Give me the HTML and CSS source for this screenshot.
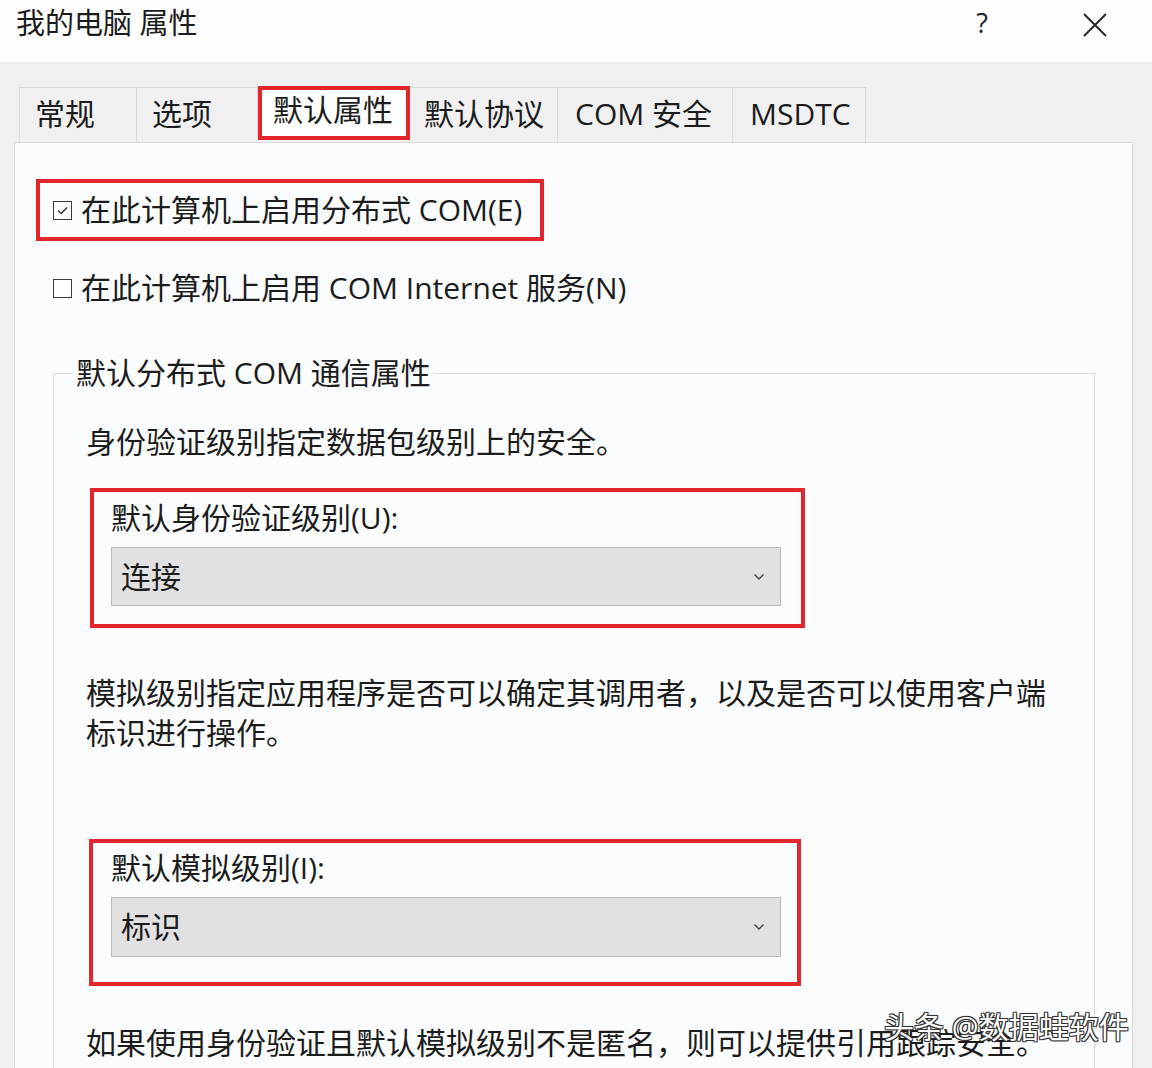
FILE: index.html
```html
<!DOCTYPE html>
<html lang="zh-CN">
<head>
  <meta charset="UTF-8" />
  <title>我的电脑 属性</title>
  <link rel="stylesheet" href="styles.css">
</head>
<body>
  <div class="dialog">
    <div class="titlebar">
      <span class="title">我的电脑 属性</span>
      <span class="help">?</span>
      <span class="close">
        <svg width="24" height="24" viewBox="0 0 24 24"><path d="M1 1 L23 23 M23 1 L1 23" stroke="#222" stroke-width="1.8" fill="none"/></svg>
      </span>
    </div>

    <div class="tabs">
      <div class="tab tab-general">常规</div>
      <div class="tab tab-options">选项</div>
      <div class="tab tab-props active">默认属性</div>
      <div class="tab tab-proto">默认协议</div>
      <div class="tab tab-sec">COM 安全</div>
      <div class="tab tab-dtc">MSDTC</div>
    </div>

    <section class="panel">
      <label class="check-row marked">
        <span class="box checked">
          <svg width="15" height="15" viewBox="0 0 15 15"><path d="M3 7.5 L6.2 10.5 L12 4.5" stroke="#333" stroke-width="1.4" fill="none"/></svg>
        </span>
        在此计算机上启用分布式 COM(E)
      </label>

      <label class="check-row plain">
        <span class="box"></span>
        在此计算机上启用 COM Internet 服务(N)
      </label>

      <fieldset class="group">
        <legend>默认分布式 COM 通信属性</legend>

        <p class="note first">身份验证级别指定数据包级别上的安全。</p>

        <div class="field marked auth">
          <div class="field-label">默认身份验证级别(U):</div>
          <div class="combo">
            <span>连接</span>
            <svg width="12" height="8" viewBox="0 0 12 8"><path d="M1.5 1.5 L6 6 L10.5 1.5" stroke="#444" stroke-width="1.4" fill="none"/></svg>
          </div>
        </div>

        <p class="note second">模拟级别指定应用程序是否可以确定其调用者，以及是否可以使用客户端标识进行操作。</p>

        <div class="field marked imp">
          <div class="field-label">默认模拟级别(I):</div>
          <div class="combo">
            <span>标识</span>
            <svg width="12" height="8" viewBox="0 0 12 8"><path d="M1.5 1.5 L6 6 L10.5 1.5" stroke="#444" stroke-width="1.4" fill="none"/></svg>
          </div>
        </div>

        <p class="note third">如果使用身份验证且默认模拟级别不是匿名，则可以提供引用跟踪安全。</p>
      </fieldset>
    </section>

    <div class="watermark">头条 @数据蛙软件</div>
  </div>
</body>
</html>
```

FILE: styles.css
```css
* {
  box-sizing: border-box;
}

html, body {
  margin: 0;
  padding: 0;
}

body {
  font-family: "Open Sans", "Noto Sans CJK SC", sans-serif;
  color: #1c1c1c;
  background-color: #f0f0f0;
}

.dialog {
  position: relative;
  height: 1068px;
  display: flex;
  flex-direction: column;
  overflow: hidden;
}

/* title bar */
.titlebar {
  flex-shrink: 0;
  height: 62px;
  background-color: #fdfdfd;
  display: flex;
  align-items: flex-start;
  padding: 3px 45px 0 16px;
  line-height: 40px;
}

.titlebar .title {
  flex: 1;
  font-size: 29px;
}

.titlebar .help {
  font-size: 27px;
  color: #222;
  margin-right: 95px;
}

.titlebar .close {
  margin-top: 10px;
  height: 24px;
  display: flex;
}

/* tabs */
.tabs {
  flex-shrink: 0;
  height: 80px;
  display: flex;
  align-items: flex-end;
  padding-left: 19px;
}

.tab {
  height: 55px;
  font-size: 30px;
  line-height: 52px;
  padding-left: 15px;
  border: 1px solid #d9d9d9;
  border-left: none;
  border-bottom: none;
  background-color: #f0f0f0;
  white-space: nowrap;
}

.tab-general { width: 118px; border-left: 1px solid #d9d9d9; }
.tab-options { width: 121px; }
.tab-proto { width: 148px; padding-left: 14px; }
.tab-sec { width: 175px; padding-left: 17px; }
.tab-dtc { width: 133px; padding-left: 17px; }

.tab.active {
  width: 152px;
  height: 54px;
  margin-bottom: 2px;
  border: 4px solid #e2262b;
  background-color: #fff;
  line-height: 40px;
  padding-left: 11px;
}

/* page panel */
.panel {
  flex: 1;
  margin: 0 19px 0 14px;
  background-color: #fbfcfd;
  border: 1px solid #d9d9d9;
  border-bottom: none;
  font-size: 30px;
  line-height: 40px;
}

.marked {
  border: 4px solid #e2262b;
}

.check-row {
  display: flex;
  align-items: center;
  gap: 9px;
  white-space: nowrap;
}

.check-row.marked {
  width: 508px;
  margin: 36px 0 0 21px;
  padding: 7px 0 7px 13px;
}

.check-row.plain {
  margin: 27px 0 0 38px;
}

.box {
  width: 19px;
  height: 19px;
  border: 1.5px solid #3a3a3a;
  background-color: #fff;
  display: flex;
  align-items: center;
  justify-content: center;
}

/* group box */
.group {
  margin: 45px 37px 0 38px;
  padding: 0 0 200px 0;
  border: 1px solid #dcdcdc;
  min-width: 0;
}

.group legend {
  margin-left: 19px;
  padding: 0 3px;
  line-height: 40px;
}

.note {
  margin: 0 0 0 32px;
  max-width: 975px;
}

.note.first { margin-top: 29px; }
.note.second { margin-top: 45px; }
.note.third { margin-top: 37px; }

.field.auth {
  width: 715px;
  margin: 26px 0 0 36px;
  padding: 6px 0 18px 17px;
}

.field.imp {
  width: 712px;
  margin: 86px 0 0 35px;
  padding: 5px 0 25px 18px;
}

.combo {
  width: 670px;
  height: 59px;
  margin-top: 9px;
  display: flex;
  align-items: center;
  justify-content: space-between;
  padding: 0 15px 0 9px;
  background-color: #e1e1e1;
  border: 1px solid #b9b9b9;
}

.imp .combo {
  height: 60px;
}

/* watermark over the bottom text */
.watermark {
  position: absolute;
  left: 884px;
  top: 1007px;
  font-size: 30px;
  line-height: 40px;
  color: #fff;
  text-shadow: -1px -1px 0 #333, 1px -1px 0 #333, -1px 1px 0 #333, 1px 1px 0 #333, 0 0 2px #000;
  white-space: nowrap;
}
```
